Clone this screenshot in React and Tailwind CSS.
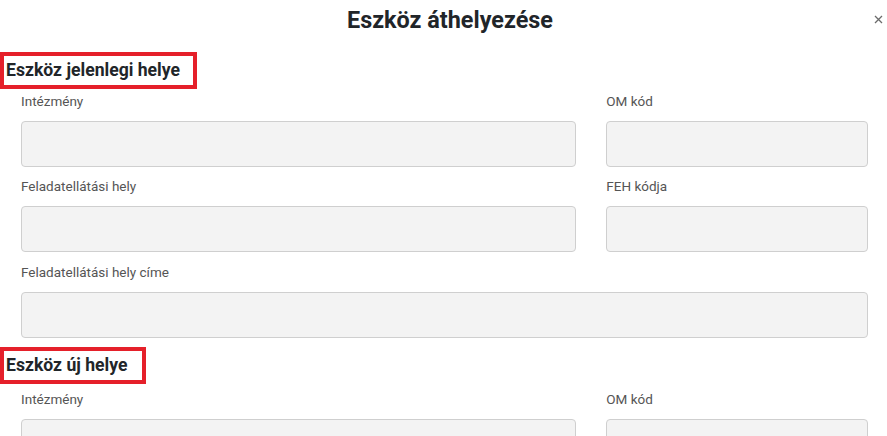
import React from "react";

function Field({ label, className = "" }) {
  return (
    <div className={className}>
      <div className="text-[13.5px] leading-[20px] text-[#555] mb-[10px]">{label}</div>
      <div className="h-[46px] rounded-[4px] border border-[#cfcfcf] bg-[#f3f3f3]" />
    </div>
  );
}

function Heading({ children, width }) {
  return (
    <div
      className="border-[4px] border-[#e5202a] h-[37px] pl-[2px] text-[17.6px] leading-[29px] font-bold text-[#212529] whitespace-nowrap"
      style={{ width }}
    >
      {children}
    </div>
  );
}

export default function App() {
  return (
    <div className="relative w-[887px] h-[436px] overflow-hidden bg-white font-['Roboto',sans-serif]">
      <div className="h-[40px] pl-[13px] flex items-center justify-center">
        <h1 className="text-[23.4px] leading-[28px] font-bold text-[#212529]">Eszköz áthelyezése</h1>
      </div>
      <button className="absolute top-[14px] right-[3px] w-[11px] h-[11px] flex items-center justify-center">
        <svg width="9" height="9" viewBox="0 0 9 9">
          <path d="M1 1L8 8M8 1L1 8" stroke="#6b6b6b" strokeWidth="1.3" fill="none" />
        </svg>
      </button>

      <div className="mt-[12px]">
        <Heading width="197px">Eszköz jelenlegi helye</Heading>
      </div>

      <div className="pl-[21px] pr-[19px] mt-[2px]">
        <div className="flex gap-[30px] mb-[9px]">
          <Field label="Intézmény" className="w-[556px]" />
          <Field label="OM kód" className="w-[262px]" />
        </div>
        <div className="flex gap-[30px] mb-[10px]">
          <Field label="Feladatellátási hely" className="w-[556px]" />
          <Field label="FEH kódja" className="w-[262px]" />
        </div>
        <div className="mb-[9px]">
          <Field label="Feladatellátási hely címe" />
        </div>
      </div>

      <div className="mt-[5px]">
        <Heading width="146px">Eszköz új helye</Heading>
      </div>

      <div className="pl-[21px] pr-[19px] mt-[5px]">
        <div className="flex gap-[30px]">
          <Field label="Intézmény" className="w-[556px]" />
          <Field label="OM kód" className="w-[262px]" />
        </div>
      </div>
    </div>
  );
}
